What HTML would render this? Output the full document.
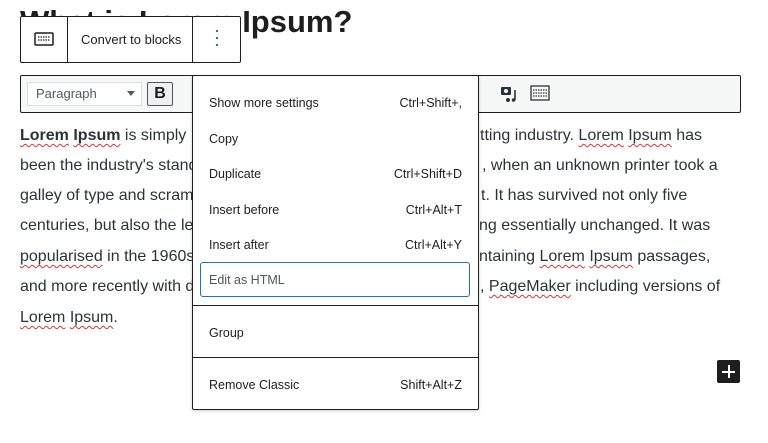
<!DOCTYPE html>
<html><head><style>
body{margin:0;width:768px;height:443px;background:#fff;position:relative;overflow:hidden;font-family:"Liberation Sans",sans-serif;color:#1e1e1e}
.a{position:absolute;white-space:nowrap}
.t{font-size:16px;color:#2c3338;line-height:20px}
.u{text-decoration:underline wavy #d63638;text-decoration-thickness:1px;text-underline-offset:3px}
.menu{position:absolute;left:192px;top:75px;width:285px;height:333px;background:#fff;border:1px solid #1e1e1e;border-radius:2px;box-shadow:0 1px 3px rgba(0,0,0,.2);z-index:5}
.mi{position:absolute;left:16px;font-size:12.5px;color:#1e1e1e}
.sc{position:absolute;right:16px;font-size:12.5px;color:#1e1e1e}
</style></head><body>
<div class="a" style="left:20px;top:4px;font-size:31px;font-weight:bold;color:#1e1e1e">What is Lorem Ipsum?</div>
<div class="a" style="left:20px;top:16px;width:219px;height:45px;background:#fff;border:1px solid #1e1e1e;border-radius:2px;z-index:3">
 <div class="a" style="left:46px;top:0;width:1px;height:45px;background:#1e1e1e"></div>
 <div class="a" style="left:171px;top:0;width:1px;height:45px;background:#1e1e1e"></div>
 <svg class="a" style="left:13px;top:15px" width="20" height="14" viewBox="0 0 20 14"><rect x="1" y="1" width="18" height="12" rx="1" fill="none" stroke="#1e1e1e" stroke-width="1.5"/><path d="M4 5h12M4 8h12" stroke="#1e1e1e" stroke-width="1.3" stroke-dasharray="1.5 1"/></svg>
 <div class="a" style="left:60px;top:15px;font-size:13px">Convert to blocks</div>
 <div class="a" style="left:195px;top:13px;width:2px;line-height:0">
  <div style="width:2px;height:2px;background:#2271b1;margin-bottom:5px"></div><div style="width:2px;height:2px;background:#2271b1;margin-bottom:5px"></div><div style="width:2px;height:2px;background:#2271b1"></div></div>
</div>
<div class="a" style="left:20px;top:75px;width:719px;height:36px;background:#f6f7f7;border:1px solid #1e1e1e;border-radius:2px">
 <div class="a" style="left:6px;top:6px;width:113px;height:22px;background:#fff;border:1px solid #dcdcde"><span class="a" style="left:8px;top:3px;font-size:13px;color:#50575e">Paragraph</span><span class="a" style="left:99px;top:8px;border:4px solid transparent;border-top:5px solid #50575e"></span></div>
 <div class="a" style="left:126px;top:6px;width:24px;height:22px;border:1px solid #50575e;border-radius:2px;background:#f0f0f1;font-weight:bold;font-size:16px;text-align:center;line-height:22px">B</div>
 <svg class="a" style="left:477px;top:8px" width="22" height="20" viewBox="0 0 22 20"><rect x="3" y="3" width="10" height="8" rx="1" fill="#2c3338"/><circle cx="8" cy="7" r="2" fill="#f6f7f7"/><circle cx="10" cy="16" r="2" fill="#2c3338"/><path d="M17 6v10" stroke="#2c3338" stroke-width="1.6"/><circle cx="15.5" cy="16" r="1.8" fill="#2c3338"/></svg>
 <svg class="a" style="left:509px;top:9px" width="20" height="16" viewBox="0 0 20 16"><rect x="1" y="1" width="18" height="14" fill="none" stroke="#2c3338" stroke-width="1.3"/><path d="M3 5h14M3 8h14M3 11h14" stroke="#2c3338" stroke-width="1.2" stroke-dasharray="1.5 1"/></svg>
</div>
<div class="a t" style="left:20px;top:126px"><b class="u">Lorem</b> <b class="u">Ipsum</b> is simply</div>
<div class="a t" style="left:20px;top:156px">been the industry's standard</div>
<div class="a t" style="left:20px;top:186px">galley of type and scrambled</div>
<div class="a t" style="left:20px;top:216px">centuries, but also the leap</div>
<div class="a t" style="left:20px;top:247px"><span class="u">popularised</span> in the 1960s</div>
<div class="a t" style="left:20px;top:277px">and more recently with desk</div>
<div class="a t" style="left:20px;top:308px"><span class="u">Lorem</span> <span class="u">Ipsum</span>.</div>
<div class="a t" style="left:480px;top:126px">tting industry. <span class="u">Lorem</span> <span class="u">Ipsum</span> has</div>
<div class="a t" style="left:482px;top:156px">, when an unknown printer took a</div>
<div class="a t" style="left:481px;top:186px">t. It has survived not only five</div>
<div class="a t" style="left:479px;top:216px">ng essentially unchanged. It was</div>
<div class="a t" style="left:479px;top:247px">ntaining <span class="u">Lorem</span> <span class="u">Ipsum</span> passages,</div>
<div class="a t" style="left:480px;top:277px">, <span class="u">PageMaker</span> including versions of</div>
<div class="menu">
 <div class="mi" style="top:20px">Show more settings</div><div class="sc" style="top:20px">Ctrl+Shift+,</div>
 <div class="mi" style="top:56px">Copy</div>
 <div class="mi" style="top:91px">Duplicate</div><div class="sc" style="top:91px">Ctrl+Shift+D</div>
 <div class="mi" style="top:127px">Insert before</div><div class="sc" style="top:127px">Ctrl+Alt+T</div>
 <div class="mi" style="top:162px">Insert after</div><div class="sc" style="top:162px">Ctrl+Alt+Y</div>
 <div class="a" style="left:7px;top:186px;width:268px;height:33px;border:1.5px solid #2271b1;border-radius:3px"></div>
 <div class="mi" style="top:197px;color:#50575e">Edit as HTML</div>
 <div class="a" style="left:0;top:229px;width:285px;height:1px;background:#1e1e1e"></div>
 <div class="mi" style="top:250px">Group</div>
 <div class="a" style="left:0;top:281px;width:285px;height:1px;background:#1e1e1e"></div>
 <div class="mi" style="top:302px">Remove Classic</div><div class="sc" style="top:302px">Shift+Alt+Z</div>
</div>
<div class="a" style="left:717px;top:360px;width:23px;height:23px;background:#1e1e1e;border-radius:2px"><div class="a" style="left:5px;top:10.5px;width:13px;height:2px;background:#fff"></div><div class="a" style="left:10.5px;top:5px;width:2px;height:13px;background:#fff"></div></div>
</body></html>
